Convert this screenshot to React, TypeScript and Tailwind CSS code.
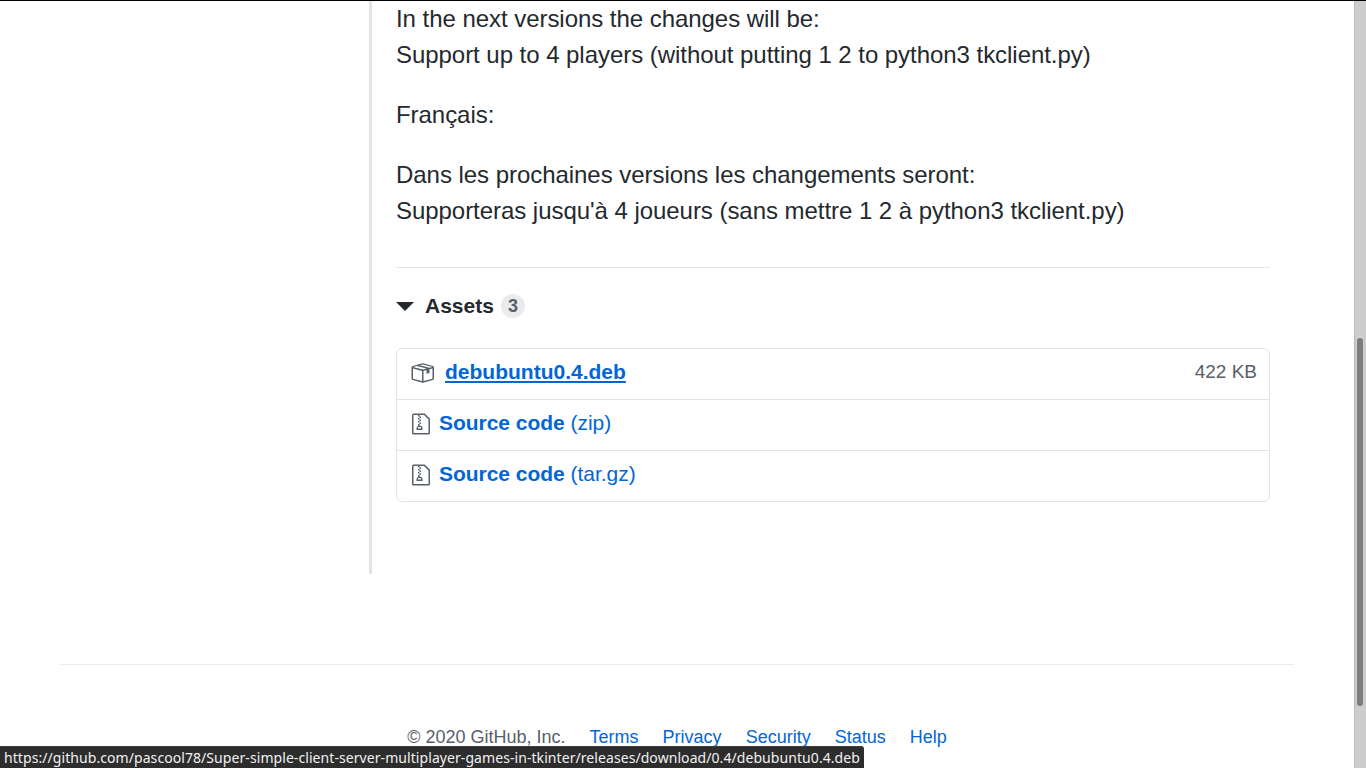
export function PackageIcon() {
  return (
    <svg viewBox="0 0 16 16" className="mt-[2px] h-6 w-6 fill-[#586069]">
      <path
        fillRule="evenodd"
        d="M1 4.27v7.47c0 .45.3.84.75.97l6.5 1.73c.16.05.34.05.5 0l6.5-1.73c.45-.13.75-.52.75-.97V4.27c0-.45-.3-.84-.75-.97l-6.5-1.74a1.4 1.4 0 00-.5 0L1.75 3.3c-.45.13-.75.52-.75.97zm7 9.09l-6-1.59V5l6 1.61v6.75zM2 4l2.5-.67L11 5.06l-2.5.67L2 4zm13 7.77l-6 1.59V6.61l2-.55V8.5l2-.53V5.53L15 5v6.77zm-2-7.24L6.5 2.8l2-.53L15 4l-2 .53z"
      />
    </svg>
  )
}

export function ZipIcon() {
  return (
    <svg viewBox="0 0 12 16" className="mt-[2px] h-6 w-[18px] fill-[#586069]">
      <path
        fillRule="evenodd"
        d="M8.5 1H1a1 1 0 00-1 1v12a1 1 0 001 1h10a1 1 0 001-1V4.5L8.5 1zM11 14H1V2h3v1h1V2h3l3 3v9zM5 4V3h1v1H5zM4 4h1v1H4V4zm1 2V5h1v1H5zM4 6h1v1H4V6zm1 2V7h1v1H5zM4 9.28A2 2 0 003 11v1h4v-1a2 2 0 00-2-2V8H4v1.28zM6 10v1H4v-1h2z"
      />
    </svg>
  )
}

function SourceRow({ kind }: { kind: string }) {
  return (
    <div className="flex h-[51px] items-center border-t border-[#e1e4e8] pb-[4px] pl-[15px]">
      <ZipIcon />
      <a href="#" className="ml-[9px] text-[21px] tracking-[-0.03px] text-[#0366d6]">
        <span className="font-bold">Source code</span> ({kind})
      </a>
    </div>
  )
}

export default function App() {
  const footerLinks = ["Terms", "Privacy", "Security", "Status", "Help"]

  return (
    <div className="relative flex h-screen flex-col overflow-hidden bg-white font-['Liberation_Sans',Arial,sans-serif] text-[#24292e]">
      <div className="h-px shrink-0 bg-black" />
      <div className="flex min-h-0 flex-1">
        <main className="min-w-0 flex-1">
          {/* Release body */}
          <div className="ml-[369px] mr-[84px] h-[573px] border-l-[3px] border-[#e1e4e8] pl-6">
            <div className="text-2xl leading-9 tracking-[-0.045px]">
              <p>
                In the next versions the changes will be:
                <br />
                Support up to 4 players (without putting 1 2 to python3 tkclient.py)
              </p>
              <p className="mt-6">Français:</p>
              <p className="mt-6">
                Dans les prochaines versions les changements seront:
                <br />
                Supporteras jusqu'à 4 joueurs (sans mettre 1 2 à python3 tkclient.py)
              </p>
            </div>

            <div className="mt-[38px] border-t border-[#e1e4e8] pt-[26px]">
              <div className="flex h-6 items-center">
                <span className="h-0 w-0 border-x-[9px] border-t-[9px] border-x-transparent border-t-[#24292e]" />
                <span className="ml-[11px] text-[21px] font-bold">Assets</span>
                <span className="ml-[7px] flex h-6 w-6 items-center justify-center rounded-full bg-[#e9ebee] text-[18px] font-bold text-[#586069]">
                  3
                </span>
              </div>

              <div className="mt-[30px] rounded-md border border-[#e1e4e8]">
                <div className="flex h-[50px] items-center justify-between pb-[4px] pl-[13px] pr-3">
                  <div className="flex items-center">
                    <PackageIcon />
                    <a href="#" className="ml-[11px] text-[21px] font-bold text-[#0366d6] underline">
                      debubuntu0.4.deb
                    </a>
                  </div>
                  <span className="text-[19px] text-[#586069]">422 KB</span>
                </div>
                <SourceRow kind="zip" />
                <SourceRow kind="tar.gz" />
              </div>
            </div>
          </div>

          {/* Footer */}
          <footer className="mx-[60px] mt-[90px] border-t border-[#eaecef] pt-[60px]">
            <div className="flex justify-center text-[18px] leading-[24px]">
              <span className="text-[#586069]">© 2020 GitHub, Inc.</span>
              {footerLinks.map((link) => (
                <a key={link} href="#" className="ml-6 text-[#0366d6]">
                  {link}
                </a>
              ))}
            </div>
          </footer>
        </main>

        {/* Browser scrollbar */}
        <div className="w-3 shrink-0 border-l border-[#bdbab6] bg-[#cdcdcd] pl-[2px] pt-[337px]">
          <div className="h-[368px] w-[6px] rounded-full bg-[#7b7f7f]" />
        </div>
      </div>

      {/* Link preview shown by the browser */}
      <div className="absolute bottom-0 left-0 flex h-[22px] items-center rounded-tr-[3px] border-t border-[#3d3d3d] bg-[#2d2d2d] pl-[4px] pr-[4px] font-['Noto_Sans',sans-serif] text-[14px] tracking-[0.07px] text-[#f2f2f2]">
        https://github.com/pascool78/Super-simple-client-server-multiplayer-games-in-tkinter/releases/download/0.4/debubuntu0.4.deb
      </div>
    </div>
  )
}
